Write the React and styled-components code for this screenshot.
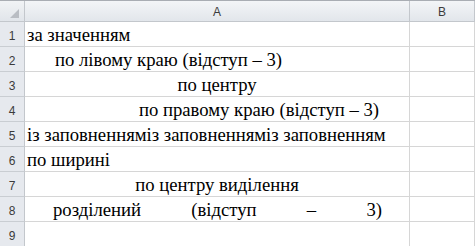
import React from 'react';
import styled, { createGlobalStyle } from 'styled-components';

const GlobalStyle = createGlobalStyle`
    html, body {
        margin: 0;
        padding: 0;
        background: #ffffff;
        overflow: hidden;
        font-family: 'Liberation Serif', 'Times New Roman', serif;
    }
`;

const rows = [
    { text: 'за значенням', align: 'left' },
    { text: 'по лівому краю (відступ – 3)', align: 'left', indent: true },
    { text: 'по центру', align: 'center' },
    { text: 'по правому краю (відступ – 3)', align: 'right', indent: true },
    { text: 'із заповненнямiз заповненнямiз заповненням'.replace(/i/g, 'і'), align: 'left' },
    { text: 'по ширині', align: 'left' },
    { text: 'по центру виділення', align: 'center' },
    { text: 'розділений (відступ – 3)', align: 'distributed', indent: true },
    { text: '', align: 'left' }
];

const justify = {
    left: 'flex-start',
    center: 'center',
    right: 'flex-end',
    distributed: 'stretch'
};

function App() {
    return (
        <>
            <GlobalStyle />
            <Sheet>
                <Corner>
                    <svg width="9" height="9" viewBox="0 0 9 9">
                        <polygon points="9,0 9,9 0,9" fill="#b9bdc3" />
                    </svg>
                </Corner>
                <ColHead>A</ColHead>
                <ColHead>B</ColHead>
                {rows.map((row, i) => (
                    <React.Fragment key={i}>
                        <RowHead>{i + 1}</RowHead>
                        <Cell $align={row.align} $indent={row.indent}>
                            <CellText $align={row.align}>{row.text}</CellText>
                        </Cell>
                        <Cell $align="left" />
                    </React.Fragment>
                ))}
            </Sheet>
        </>
    );
}

const Sheet = styled.div`
    display: grid;
    grid-template-columns: 25px 385px 65px;
    grid-template-rows: 21px repeat(9, 25px);
    width: 475px;
    border-top: 1px solid #a9adb3;
    box-sizing: border-box;
`;

const Corner = styled.div`
    box-sizing: border-box;
    display: flex;
    background: linear-gradient(#f1f3f5, #e1e5ea);
    border-right: 1px solid #c3c7cc;
    border-bottom: 1px solid #c3c7cc;
    justify-content: flex-end;
    align-items: flex-end;
    padding: 0 5px 3px 0;
`;

const ColHead = styled.div`
    box-sizing: border-box;
    font-family: 'Liberation Sans', Arial, sans-serif;
    font-size: 12px;
    color: #3b3b3b;
    display: flex;
    align-items: center;
    justify-content: center;
    background: linear-gradient(#f3f5f7, #e2e6eb);
    border-right: 1px solid #c3c7cc;
    border-bottom: 1px solid #c3c7cc;
    padding-top: 1px;
`;

const RowHead = styled.div`
    box-sizing: border-box;
    font-family: 'Liberation Sans', Arial, sans-serif;
    font-size: 12px;
    color: #3b3b3b;
    display: flex;
    align-items: center;
    justify-content: center;
    background: #e6e9ee;
    border-right: 1px solid #c3c7cc;
    border-bottom: 1px solid #c9cdd2;
    padding-top: 4px;
`;

const Cell = styled.div`
    box-sizing: border-box;
    border-right: 1px solid #d6d6d6;
    border-bottom: 1px solid #d6d6d6;
    display: flex;
    align-items: flex-end;
    justify-content: ${(p) => justify[p.$align]};
    padding: ${(p) =>
        p.$align === 'distributed'
            ? '0 27px 1px 28px'
            : p.$indent
            ? '0 30px 1px 30px'
            : '0 2px 1px 2px'};
    overflow: hidden;
    white-space: nowrap;
`;

const CellText = styled.span`
    font-family: 'Liberation Serif', 'Times New Roman', serif;
    font-size: 18.7px;
    line-height: 20px;
    color: #000000;
    flex: ${(p) => (p.$align === 'distributed' ? '1' : '0 0 auto')};
    text-align: ${(p) => (p.$align === 'distributed' ? 'justify' : 'left')};
    text-align-last: ${(p) => (p.$align === 'distributed' ? 'justify' : 'auto')};
    white-space: ${(p) => (p.$align === 'distributed' ? 'normal' : 'nowrap')};
`;

export default App;
